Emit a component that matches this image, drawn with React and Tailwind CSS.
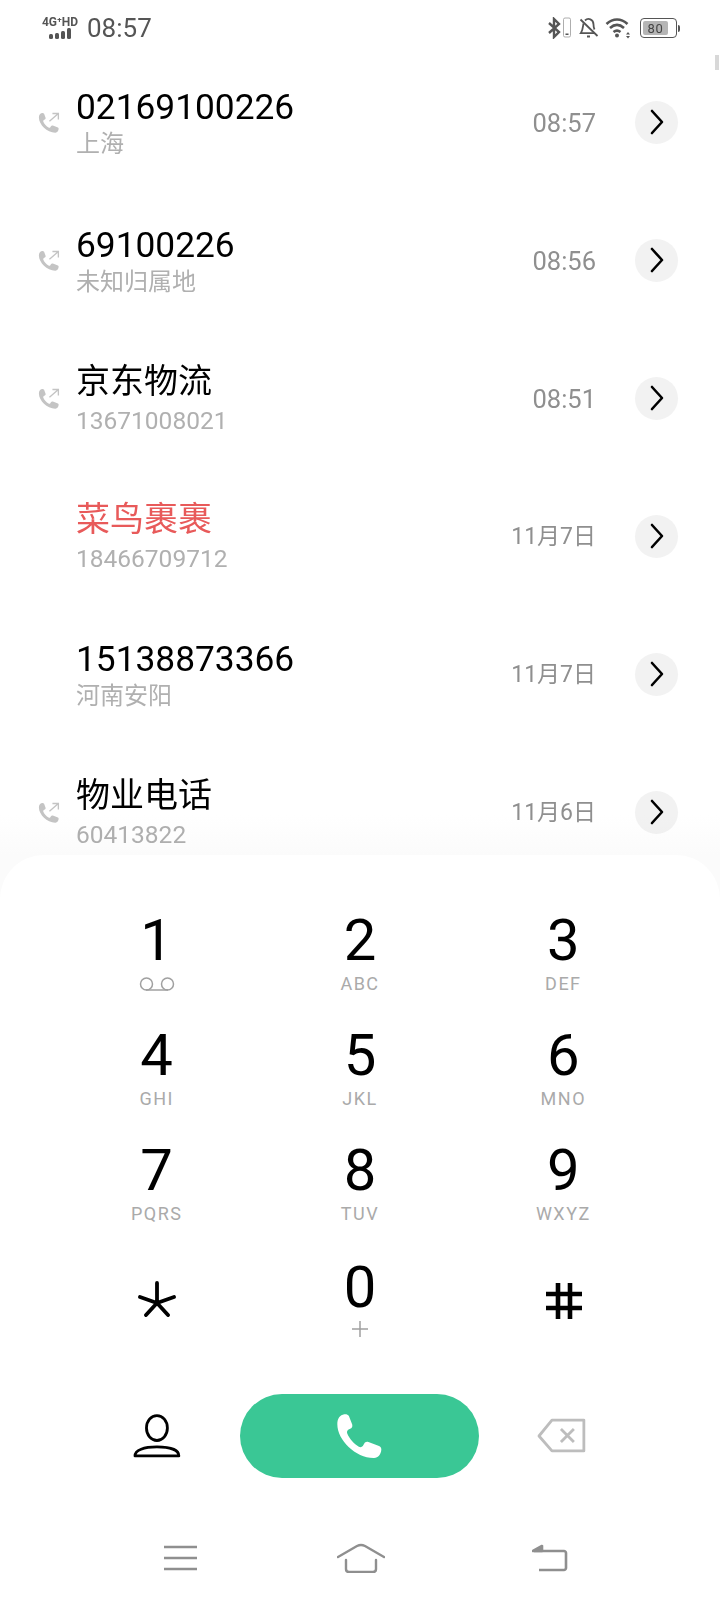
// Dialer screen: recent call list on top, keypad sheet below.
const font = { fontFamily: '"Roboto", "Noto Sans CJK SC", sans-serif' };

const calls = [
  { name: "02169100226", sub: "上海", time: "08:57", outgoing: true },
  { name: "69100226", sub: "未知归属地", time: "08:56", outgoing: true },
  { name: "京东物流", sub: "13671008021", time: "08:51", outgoing: true },
  { name: "菜鸟裹裹", sub: "18466709712", time: "11月7日", missed: true },
  { name: "15138873366", sub: "河南安阳", time: "11月7日" },
  { name: "物业电话", sub: "60413822", time: "11月6日", outgoing: true },
];

const keys = [
  ["1", null],
  ["2", "ABC"],
  ["3", "DEF"],
  ["4", "GHI"],
  ["5", "JKL"],
  ["6", "MNO"],
  ["7", "PQRS"],
  ["8", "TUV"],
  ["9", "WXYZ"],
];

// handset, drawn in the coordinates of the viewBox below
const PHONE =
  "M735 522C722 524 714 535 714 552C714 600 770 655 825 654C838 653 846 642 847 628C847 622 843 619 838 617L808 606C802 604 798 606 795 611L791 618C788 622 783 622 779 620C765 612 750 595 744 580C742 575 744 571 748 568L756 564C759 562 760 558 759 553L749 527C746 523 741 521 735 522Z";

const CallIcon = () => (
  <svg width="22" height="22" viewBox="708 515 148 148" className="text-[#c4c4c4]">
    <path d={PHONE} fill="currentColor" />
    <path d="M785 578L845 525M805 525H845V565" fill="none" stroke="currentColor" strokeWidth="9" />
  </svg>
);

const StatusBar = () => (
  <div className="flex h-[53px] shrink-0 items-center justify-between pl-[41px] pr-[40px] pt-[3px] text-[#555555]">
    <div className="flex items-center gap-[8px]">
      <div className="flex w-[38px] flex-col items-center">
        <span className="text-[12px] font-bold leading-[11px] whitespace-nowrap">4G⁺HD</span>
        <svg width="24" height="11" viewBox="0 0 24 11">
          <rect x="1" y="6" width="4" height="5" rx="1.5" fill="currentColor" />
          <rect x="7" y="5" width="4" height="6" rx="1.5" fill="currentColor" />
          <rect x="13" y="3" width="4" height="8" rx="1.5" fill="currentColor" />
          <rect x="19" y="0" width="4" height="11" rx="1.5" fill="currentColor" />
        </svg>
      </div>
      <span className="text-[26px] leading-none">08:57</span>
    </div>
    <div className="flex items-center">
      <svg width="23" height="22" viewBox="0 0 23 22" fill="none" stroke="currentColor" strokeWidth="2.4">
        <path d="M1 6l10 9-5 5V2l5 5L1 16" />
        <rect x="15.5" y="1" width="7" height="19" rx="1.5" strokeWidth="0.8" stroke="#999999" />
        <rect x="17.5" y="16.5" width="3" height="1.5" fill="#555555" stroke="none" />
      </svg>
      <svg width="20" height="22" viewBox="0 0 20 22" fill="none" stroke="currentColor" strokeWidth="1.8" className="ml-[8px]">
        <path d="M4.5 6.5C4 9 4 13 1.8 16.2h13.5M6 3.5c3-3 8.5-1.5 8.5 4 0 2 .3 3.5 1 5" />
        <path d="M1.5 2.5l17 16.5M8 19.5h3" />
      </svg>
      <svg width="27" height="22" viewBox="0 0 26 22" fill="none" stroke="currentColor" strokeWidth="2.6" className="ml-[6px]">
        <path d="M1 7c6.5-6 14.5-6 21 0" />
        <path d="M4.5 11c4.5-4 9.5-4 14 0" />
        <path d="M8 15c2.5-2 4.5-2 7 0" />
        <circle cx="11.5" cy="18.5" r="2" fill="currentColor" stroke="none" />
        <path d="M22.5 15l2 2.5h-4zM22.5 21.5l2-2.5h-4z" fill="currentColor" stroke="none" />
      </svg>
      <div className="ml-[8px] flex items-center">
        <div className="flex h-[20px] w-[37px] items-center rounded-[4px] border border-[#555555] p-[2px]">
          <div className="flex h-full w-[80%] items-center justify-center rounded-[2px] bg-[#b5b5b5] text-[13px] leading-none tracking-[0.5px] text-[#444444]">
            80
          </div>
        </div>
        <div className="ml-[1px] h-[7px] w-[2px] rounded-r bg-[#555555]" />
      </div>
    </div>
  </div>
);

const CallRow = ({ call }) => {
  const numberName = /^\d/.test(call.name);
  const numberSub = /^\d/.test(call.sub);
  const clock = call.time.includes(":");
  return (
    <div className="flex h-[138px] shrink-0 items-center pl-[38px] pr-[42px]">
      <div className="flex w-[38px] shrink-0 pt-[1px]">{call.outgoing && <CallIcon />}</div>
      <div className="flex min-w-0 flex-1 flex-col pb-[2px]">
        <span
          className={`leading-[42px] ${numberName ? "translate-y-[2px] text-[35.3px]" : "text-[34px]"} ${
            call.missed ? "text-[#e85a5a]" : "text-black"
          }`}
        >
          {call.name}
        </span>
        <span
          className={`mt-[3px] leading-[30px] text-[#b0b0b0] ${
            numberSub ? "translate-y-[1px] text-[24.5px]" : "text-[24px]"
          }`}
        >
          {call.sub}
        </span>
      </div>
      <span className={`pt-[2px] text-[#8f8f8f] ${clock ? "text-[25.5px]" : "text-[23px]"}`}>{call.time}</span>
      <div className="ml-[39px] flex h-[43px] w-[43px] items-center justify-center rounded-full bg-[#f2f2f2]">
        <svg width="16" height="26" viewBox="0 0 16 26" fill="none" stroke="black" strokeWidth="2.6" strokeLinecap="round" strokeLinejoin="round">
          <path d="M3 2l10 11L3 24" />
        </svg>
      </div>
    </div>
  );
};

const Key = ({ digit, label }) => (
  <div className="flex h-[115px] flex-col items-center">
    <span className="text-[58px] leading-[68px] text-black">{digit}</span>
    {label ? (
      <span className="-mt-[1px] text-[18px] leading-[22px] tracking-[1.5px] text-[#aaaaaa]">{label}</span>
    ) : (
      <svg width="38" height="16" viewBox="0 0 38 16" fill="none" stroke="#a0a0a0" strokeWidth="1.5" className="mt-[2px]">
        <circle cx="8.5" cy="8" r="6" />
        <circle cx="29.5" cy="8" r="6" />
        <path d="M8 14h22" />
      </svg>
    )}
  </div>
);

export default function App() {
  return (
    <div className="relative flex h-[1600px] w-[720px] flex-col overflow-hidden bg-white" style={font}>
      <div className="flex h-[855px] shrink-0 flex-col overflow-hidden">
        <StatusBar />
        {calls.map((c) => (
          <CallRow key={c.name} call={c} />
        ))}
      </div>

      {/* scroll thumb and fade behind the sheet's corners */}
      <div className="absolute right-[1px] top-[55px] h-[15px] w-[4px] bg-[#d8d8d8]" />
      <div className="pointer-events-none absolute left-0 right-0 top-[815px] h-[40px] bg-gradient-to-b from-white to-[#fbfbfb] mix-blend-multiply" />
      <div className="absolute left-0 right-0 top-[855px] h-[45px] bg-[#fbfbfb]" />

      {/* keypad sheet */}
      <div className="relative flex flex-1 flex-col rounded-t-[44px] bg-white pt-[51px]">
        <div className="grid grid-cols-3 px-[55px]">
          {keys.map(([digit, label]) => (
            <Key key={digit} digit={digit} label={label} />
          ))}
          <div className="flex h-[115px] justify-center pt-[30px]">
            <svg width="38" height="36" viewBox="0 0 38 36" fill="none" stroke="black" strokeWidth="3.8" strokeLinecap="round">
              <path d="M19 2v20M2 16l17 6 17-6M8 34l11-12 11 12" />
            </svg>
          </div>
          <div className="flex h-[115px] flex-col items-center">
            <span className="mt-[2px] text-[58px] leading-[68px] text-black">0</span>
            <svg width="18" height="18" viewBox="0 0 18 18" stroke="#a0a0a0" strokeWidth="1.5" className="-mt-[1px]">
              <path d="M9 1v16M1 9h16" />
            </svg>
          </div>
          <div className="flex h-[115px] justify-center pl-[2px] pt-[32px]">
            <svg width="36" height="36" viewBox="0 0 36 36" fill="none" stroke="black" strokeWidth="4.6">
              <path d="M12 0v36M24 0v36M0 11h36M0 25h36" />
            </svg>
          </div>
        </div>

        <div className="mt-[28px] flex items-center px-[133px]">
          <svg width="48" height="44" viewBox="0 0 48 44" fill="none" stroke="black" strokeWidth="2.8">
            <ellipse cx="24" cy="14" rx="10.5" ry="12.5" />
            <path d="M2 42c0-6 9-9 22-9s22 3 22 9z" strokeLinejoin="round" />
          </svg>
          <div className="ml-[59px] flex h-[84px] w-[240px] items-center justify-center rounded-full bg-[#3ac795]">
            <svg width="47" height="48" viewBox="710 515 142 145" fill="white">
              <path d={PHONE} />
            </svg>
          </div>
          <svg width="50" height="36" viewBox="0 0 50 36" fill="none" stroke="#bdbdbd" strokeWidth="2.8" strokeLinejoin="round" className="ml-[58px]">
            <path d="M15 2h32v31H15L2 18z" />
            <path d="M24 11l13 13M37 11L24 24" />
          </svg>
        </div>

        <div className="mt-[65px] flex items-center pl-[164px]">
          <svg width="33" height="26" viewBox="0 0 33 26" fill="none" stroke="#8f8f8f" strokeWidth="2.6">
            <path d="M0 2h33M0 13h33M0 24h33" />
          </svg>
          <svg width="48" height="30" viewBox="0 0 48 30" fill="none" stroke="#8f8f8f" strokeWidth="2.4" strokeLinecap="round" strokeLinejoin="round" className="ml-[140px]">
            <path d="M1 14L20 3c2.5-1.3 5.5-1.3 8 0l19 11" />
            <path d="M9 17v9c0 1.5 1 3 3 3h24c2 0 3-1.5 3-3v-9" />
          </svg>
          <svg width="36" height="28" viewBox="0 0 36 28" fill="none" stroke="#8f8f8f" strokeWidth="2.6" strokeLinejoin="round" className="ml-[147px]">
            <path d="M2 7h30c1 0 2 1 2 2v15c0 1-1 2-2 2H7" />
            <path d="M1 7l9-5v5z" fill="#8f8f8f" />
          </svg>
        </div>
      </div>
    </div>
  );
}
